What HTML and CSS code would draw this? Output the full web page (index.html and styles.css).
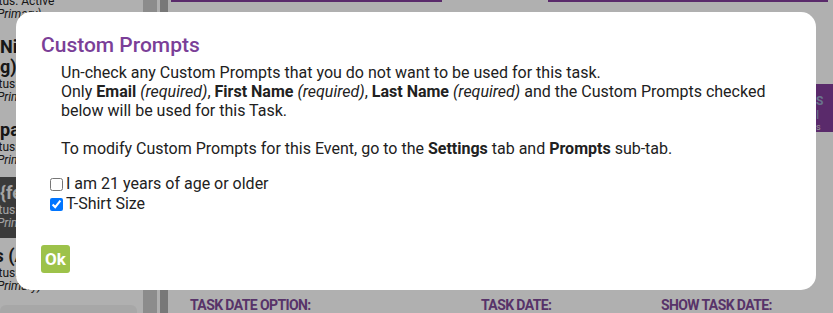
FILE: index.html
```html
<!DOCTYPE html>
<html lang="en">
<head>
  <meta charset="utf-8">
  <meta name="viewport" content="width=device-width, initial-scale=1">
  <title>Task Settings</title>
<link rel="stylesheet" href="styles.css">
</head>
<body>
  <div class="page">
    <aside class="sidebar">
      <div class="item first">
        <div class="item-title">Parking Lot</div>
        <div class="item-status">Status: Active</div>
        <div class="item-role">(Primary)</div>
      </div>
      <div class="item">
        <div class="item-title">Night Shift (Parkin<br>g)</div>
        <div class="item-status">Status: Active</div>
        <div class="item-role">(Primary)</div>
      </div>
      <div class="item">
        <div class="item-title shift-s">Spanish Mass</div>
        <div class="item-status">Status: Active</div>
        <div class="item-role">(Primary)</div>
      </div>
      <div class="item selected">
        <div class="item-title">{feedback}</div>
        <div class="item-status">Status: Active</div>
        <div class="item-role">(Primary)</div>
      </div>
      <div class="item">
        <div class="item-title shift-l">Ushers (AM)</div>
        <div class="item-status">Status: Active</div>
        <div class="item-role">(Primary)</div>
      </div>
      <div class="item add-box"></div>
    </aside>
    <div class="gutter"></div>
    <div class="gutter dark"></div>
    <main class="content">
      <div class="top-bars">
        <div class="tab-bar short"></div>
        <div class="tab-bar long"></div>
      </div>
      <div class="banner">
        <strong>S</strong>
        <span>I</span>
        <small>ows</small>
      </div>
      <div class="date-row">
        <div class="date-field wide">
          <label>TASK DATE OPTION:</label>
          <div class="date-input"></div>
        </div>
        <div class="date-field">
          <label>TASK DATE:</label>
          <div class="date-input"></div>
        </div>
        <div class="date-field">
          <label>SHOW TASK DATE:</label>
          <div class="date-input"></div>
        </div>
      </div>
    </main>
  </div>

  <div class="overlay">
    <div class="modal">
      <h2>Custom Prompts</h2>
      <p class="modal-text">
        Un-check any Custom Prompts that you do not want to be used for this task.<br>
        Only <b>Email</b> <i>(required)</i>, <b>First Name</b> <i>(required)</i>, <b>Last Name</b> <i>(required)</i> and the Custom Prompts checked below will be used for this Task.<br>
        <br>
        To modify Custom Prompts for this Event, go to the <b>Settings</b> tab and <b>Prompts</b> sub-tab.
      </p>
      <div class="prompt-list">
        <label><input type="checkbox">I am 21 years of age or older</label>
        <label><input type="checkbox" checked>T-Shirt Size</label>
      </div>
      <button class="ok-btn">Ok</button>
    </div>
  </div>
</body>
</html>
```
FILE: styles.css
```css
html, body {
  margin: 0;
  height: 100%;
  overflow: hidden;
}
body {
  font-family: Roboto, "Liberation Sans", sans-serif;
  background: #fff;
  color: #222;
}
.page {
  display: flex;
  height: 100%;
}
.sidebar {
  width: 143px;
  flex: none;
  display: flex;
  flex-direction: column;
  gap: 2px;
  overflow: hidden;
  background: #fff;
}
.item {
  padding: 6px 0 8px;
  white-space: nowrap;
}
.item.first {
  margin-top: -32px;
}
.item-title {
  font-size: 18px;
  font-weight: bold;
  line-height: 20px;
}
.item-title.shift-s {
  margin-left: -11px;
}
.item-title.shift-l {
  margin-left: -53px;
}
.item-status {
  font-size: 12px;
  line-height: 14px;
  margin-left: -19px;
}
.item-role {
  font-size: 12px;
  font-style: italic;
  line-height: 13px;
  margin-left: -7px;
}
.item.selected {
  background: #555;
  color: #eee;
}
.item.add-box {
  margin: 2px 6px 0 0;
  height: 40px;
  background: #f2f2f2;
  border-radius: 6px;
}
.gutter {
  width: 14px;
  flex: none;
  background: #cbcbcb;
  border-right: 3px solid #fff;
}
.gutter.dark {
  width: 8px;
  background: #aeaeae;
  border-right: none;
}
.content {
  flex: 1;
  display: flex;
  flex-direction: column;
  padding-left: 22px;
}
.top-bars {
  display: flex;
  height: 2px;
}
.tab-bar {
  background: #833d9b;
}
.tab-bar.short {
  margin-left: -19px;
  width: 271px;
}
.tab-bar.long {
  margin-left: 106px;
  width: 280px;
}
.banner {
  align-self: flex-end;
  margin-top: 82px;
  width: 17px;
  height: 48px;
  background: #833d9b;
  color: #9ac;
  font-size: 12px;
  display: flex;
  flex-direction: column;
  padding-left: 4px;
  overflow: hidden;
  white-space: nowrap;
}
.banner strong {
  margin-top: 10px;
}
.banner small {
  font-size: 9px;
  margin-left: -12px;
  color: #ddd;
}
.date-row {
  margin-top: auto;
  margin-bottom: -8px;
  display: flex;
  gap: 20px;
  height: 24px;
}
.date-field {
  display: flex;
  flex-direction: column;
  width: 160px;
}
.date-field.wide {
  width: 271px;
}
.date-field label {
  font-size: 14px;
  font-weight: bold;
  letter-spacing: -0.6px;
  color: #7f4a98;
  line-height: 16px;
}
.date-input {
  margin-top: 3px;
  height: 20px;
  border: 1px solid #ccc;
  background: #fff;
}

.overlay {
  position: fixed;
  inset: 0;
  background: rgba(0, 0, 0, 0.31);
  padding: 12px 17px 0 16px;
}
.modal {
  background: #fff;
  border-radius: 15px;
  height: 278px;
  box-sizing: border-box;
  padding: 19px 25px 0;
}
.modal h2 {
  margin: 0;
  font-size: 21px;
  font-weight: 500;
  line-height: 28px;
  color: #7b3f98;
}
.modal-text {
  margin: 4px 0 0 20px;
  font-size: 16px;
  line-height: 19px;
  color: #212121;
}
.prompt-list {
  display: flex;
  flex-direction: column;
  margin: 16px 0 0 5px;
  font-size: 16px;
  line-height: 20px;
}
.prompt-list label {
  display: flex;
  align-items: center;
}
.prompt-list input {
  margin: 0 3px 0 4px;
  width: 13px;
  height: 13px;
}
.ok-btn {
  margin-top: 31px;
  border: none;
  border-radius: 3px;
  background: #9dc24a;
  color: #fff;
  font-family: Roboto, "Liberation Sans", sans-serif;
  font-size: 17px;
  font-weight: bold;
  padding: 0 4px;
  height: 28px;
  line-height: 28px;
}
```
